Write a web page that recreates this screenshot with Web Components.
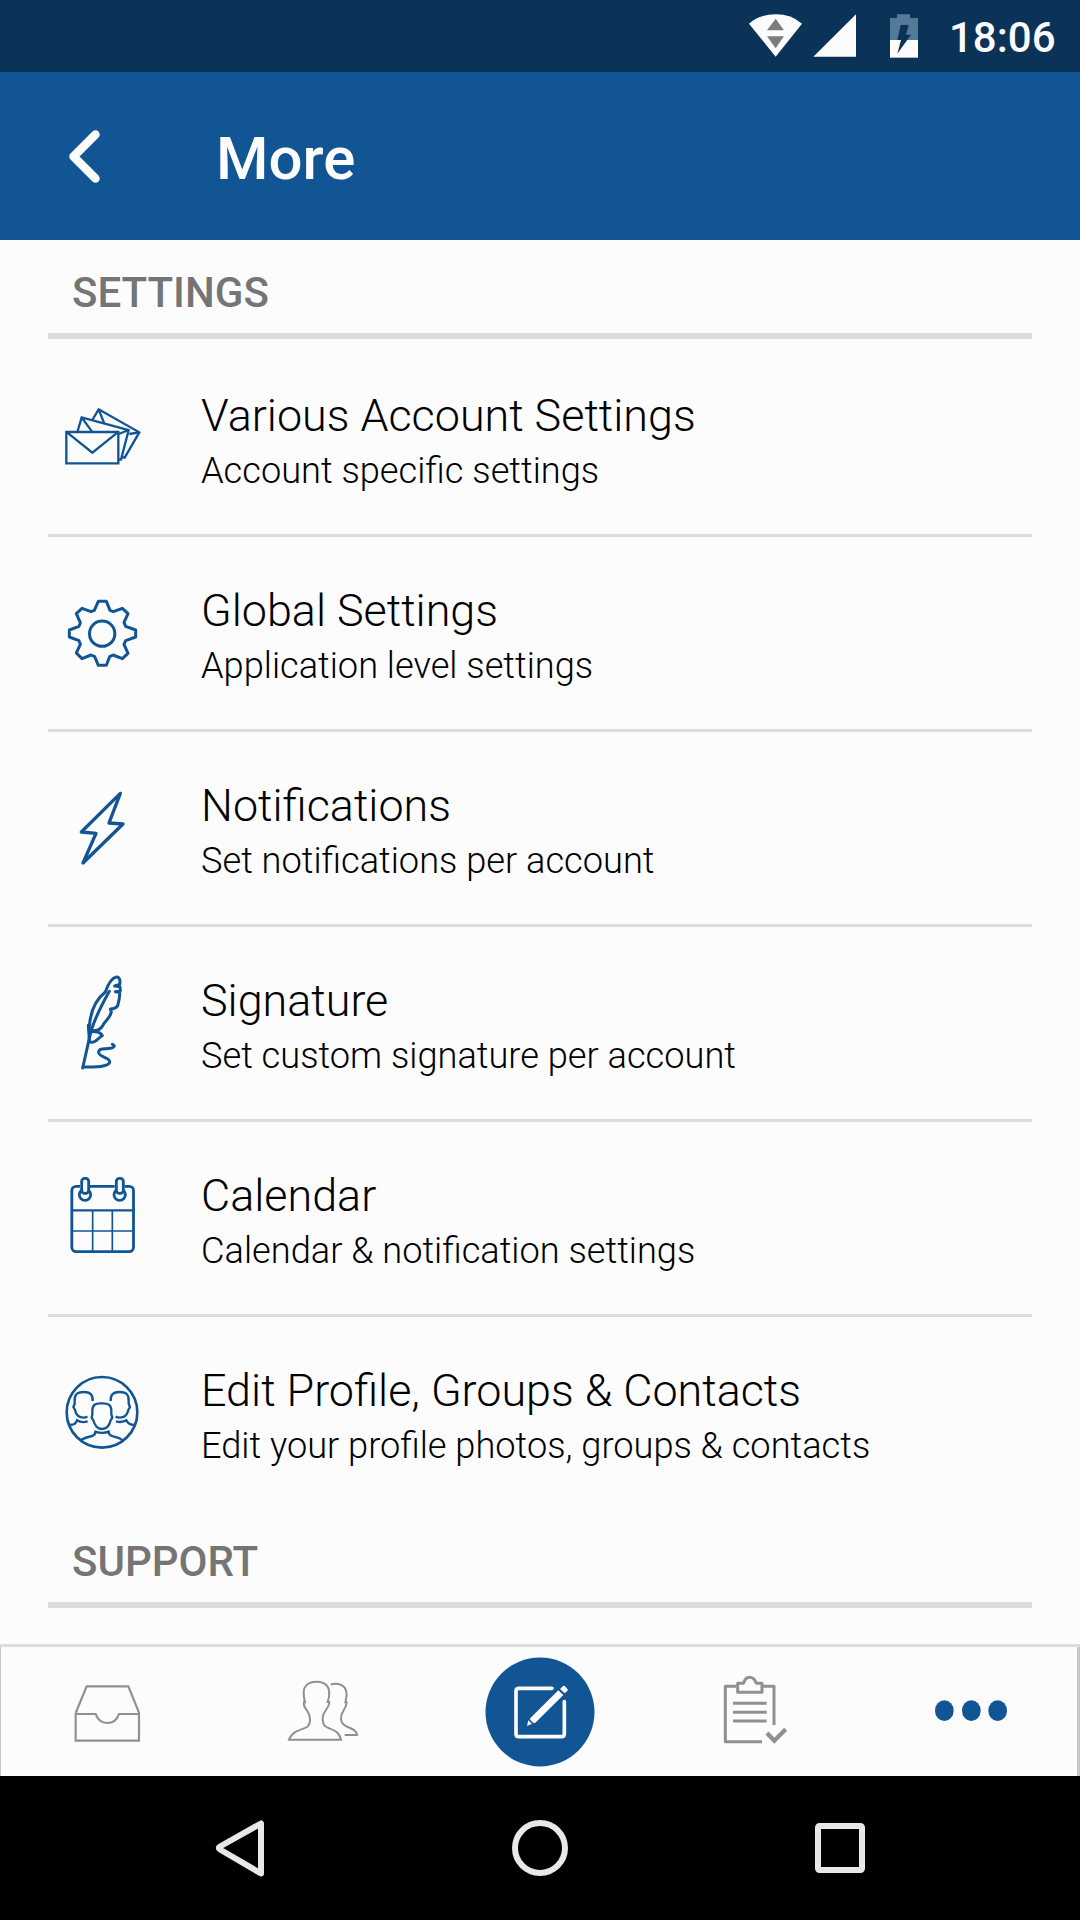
<!DOCTYPE html>
<html lang="en">
<head>
<meta charset="utf-8">
<title>More</title>
<style>
html,body{margin:0;padding:0;height:100%;background:#fcfcfc}
body{font-family:Roboto,"Open Sans",sans-serif;overflow:hidden}
</style>
</head>
<body>
<app-screen></app-screen>
<script>
const BLUE = '#125594';
const icons = {
  mail: ['0 -15 390 390', `<g stroke-width="7"><path d="M79 156H235V250H79Z"/><path d="M82 158L157 218L232 158"/><path d="M113 153L125 112L266 150L243 239H236M125 112L156 155M266 150L236 162"/><path d="M157 120L176 88L298 157L254 233L246 231M176 88L193 131M298 157L268 162"/></g>`],
  gear: ['0 -30 390 390', `<g stroke-width="9" stroke-linejoin="round"><circle cx="186.500" cy="161" r="38"/><path d="M175 64H199L210 91L220 95L247 85L264 101L252 127L257 139L287 150V171L257 182L252 193L264 220L247 236L219 225L209 230L199 256H175L164 230L153 225L126 236L109 219L121 193L117 182L88 171V150L117 139L121 128L109 101L126 85L153 95L163 91Z"/></g>`],
  bolt: ['0 -15 390 390', `<path stroke-width="10" stroke-linejoin="round" d="M241 70L124 186L168 190L129 279L249 162L207 159Z"/>`],
  quill: ['0 0 390 390', `<g stroke-width="9" stroke-linecap="round" stroke-linejoin="round"><path d="M128 324L148 235L155 207C165 177 185 135 208 94"/><path d="M148 212V200C151 157 164 121 196 96C203 76 214 54 229 51C240 50 241 64 239 73L224 78L240 80L241 92L226 95L239 97C240 111 236 126 233 137C228 145 220 147 211 147L214 155C211 175 193 184 188 197C182 208 168 213 153 212"/><path d="M145 196L147 224L153 213C166 217 181 212 187 227C178 229 171 247 154 247L148 245L147 225"/><path d="M129 321C161 322 203 322 209 307C213 292 178 293 176 278C175 262 195 268 210 265C218 265 223 260 223 257L217 253"/></g>`],
  calendar: ['0 -15 390 390', `<g stroke-width="8.500"><rect x="95.500" y="79" width="185" height="196" rx="13"/><path stroke-width="7" d="M96 151H280"/><path stroke-width="5" d="M158 151V275M217 151V275M96 213H280"/><g><path stroke="#fcfcfc" stroke-width="13" d="M120 79H150"/><circle cx="135" cy="104" r="17"/><rect x="125" y="55" width="21" height="45" rx="9" fill="#fcfcfc"/></g><g transform="translate(104 0)"><path stroke="#fcfcfc" stroke-width="13" d="M120 79H150"/><circle cx="135" cy="104" r="17"/><rect x="125" y="55" width="21" height="45" rx="9" fill="#fcfcfc"/></g></g>`],
  people: ['0 0 390 390', `<g stroke-width="8"><circle cx="186" cy="187" r="106"/><path stroke-width="7" d="M185 160C166 159 157 165 157 182V194L155 203L160 211C164 228 175 237 186 237C198 237 208 228 212 211L217 203L214 193V182C214 166 206 159 185 160Z"/><path stroke-width="7" d="M158 153C159 134 151 126 131 126C110 126 103 135 104 153V161L100 171L105 180C108 194 118 203 131 203C136 203 140 201 142 199M212 153C211 134 219 126 239 126C260 126 267 135 266 153V161L270 171L265 180C262 194 252 203 239 203C234 203 229 201 227 199"/><path stroke-width="7" d="M90 224C103 226 108 219 111 211C119 216 133 217 143 214M282 224C269 226 263 219 259 211C251 216 239 217 228 214M122 272C134 259 154 263 164 253L166 245C178 249 194 250 206 245L208 253C216 263 237 258 248 272"/></g>`],
  inbox: ['0 51 648 387', `<path stroke-width="6.500" d="M227 249L260 169H385L417 248V332H227V252H287C293 269 304 279 322 279C340 279 351 270 357 252H417"/>`],
  contacts: ['648 51 648 387', `<path stroke-width="6" d="M867 329C875 309 888 304 910 296C922 292 929 288 930 272C931 243 914 239 912 225V217H915C909 193 910 175 918 167C931 152 965 151 979 165C990 177 989 198 983 216H988C987 240 966 242 968 269C969 287 976 290 988 295C1008 303 1018 308 1023 329ZM992 164C1006 158 1026 161 1034 173C1043 186 1040 199 1036 217H1040C1039 239 1023 242 1023 265C1023 280 1030 286 1043 291C1062 299 1069 302 1071 315H1034"/>`],
  compose: ['-24 51 648 387', `<circle cx="300" cy="246" r="163.500" fill="${BLUE}" stroke="none"/><path stroke="#fcfcfc" stroke-width="11" stroke-linecap="round" d="M336 175H237Q228 175 228 184V311Q228 320 237 320H364Q373 320 373 311V215"/><g fill="#fcfcfc" stroke="none"><path d="M355 181L370 195L286 278Q282 281 277 276L271 270Q268 266 272 263ZM360 177L369 168Q372 166 375 169L383 178Q385 181 381 184L374 190ZM265 271L276 282Q270 284 261 288Z"/></g>`],
  tasks: ['624 51 648 387', `<g stroke-width="9" stroke-linejoin="round"><path d="M966 335H856V169H889M969 169H1002V285"/><path d="M893 160H909C913 157 913 153 915 150C922 139 938 140 944 150C947 154 945 157 950 160H966V187H893Z"/><path d="M879 220H980M879 247H980M879 273H980"/><path stroke-width="13" stroke-linejoin="miter" d="M981 309L1003 332L1037 298"/></g>`],
  dots: ['72 201 648 387', `<g fill="${BLUE}" stroke="none"><ellipse cx="313" cy="392" rx="28" ry="31"/><ellipse cx="394" cy="392" rx="28" ry="31"/><ellipse cx="473" cy="392" rx="28" ry="31"/></g>`],
  chevron: ['0 0 400 168', `<path stroke="#fcfcfc" stroke-width="8.500" stroke-linecap="round" stroke-linejoin="round" d="M95.500 62.500L73.500 84.500L95.500 106.500"/>`],
  status: ['0 0 630 216', `<g stroke="none" fill="#fcfcfc"><path d="M87 71Q118 43 167 43Q214 43 246 71L167 170Z"/><path fill="#7b7c7d" d="M141 91L167 56L192 91ZM141 109H192L167 145Z"/><path d="M280 170L408 43V170Z"/><path fill="#557999" d="M510 120V54H531V43H570V54H594V120Z"/><path d="M510 120H594V173H510Z"/><path fill="#0b3358" d="M542 75H566L558 104H573L532 161L543 120H532Z"/></g>`],
  back: ['90 0 300 144', `<path stroke="#e8e8e8" stroke-width="6" stroke-linejoin="round" d="M261 47.500V97.500L220 73.500Q217.500 72 220 70.500Z"/>`],
  home: ['390 0 300 144', `<circle cx="540" cy="72" r="25" stroke="#e8e8e8" stroke-width="6"/>`],
  recents: ['690 0 300 144', `<rect x="818" y="50" width="44" height="44" rx="1.500" stroke="#e8e8e8" stroke-width="6"/>`]
};

const define = (name, render) => customElements.define(name, class extends HTMLElement {
  connectedCallback() {
    if (!this.shadowRoot) this.attachShadow({mode: 'open'}).innerHTML = render(this);
  }
});

define('line-icon', el => {
  const [box, art] = icons[el.getAttribute('name')];
  return `<style>:host{display:block;flex:none}svg{display:block;width:100%;height:100%;fill:none;stroke:currentColor}</style><svg viewBox="${box}" aria-hidden="true">${art}</svg>`;
});

define('status-bar', () => `<style>
:host{display:flex;justify-content:flex-end;height:72px;background:#0b3358;color:#fcfcfc}
line-icon{width:210px;height:72px}
time{width:150px;box-sizing:border-box;padding-left:19px;font-size:42px;font-weight:500;line-height:76px;white-space:nowrap}
</style><line-icon name="status"></line-icon><time><slot></slot></time>`);

define('title-bar', () => `<style>
:host{display:flex;height:168px;background:${BLUE};color:#fcfcfc}
line-icon{width:400px;height:168px;margin-right:-184px}
h1{margin:0;font-size:60px;font-weight:500;line-height:174px}
</style><line-icon name="chevron"></line-icon><h1><slot></slot></h1>`);

define('section-header', () => `<style>
:host{display:block;box-sizing:border-box;height:99px;margin:0 48px;padding-left:24px;border-bottom:6px solid #dcdedd;color:#757575;font-size:42px;font-weight:500;line-height:105px}
</style><slot></slot>`);

define('setting-row', el => `<style>
:host{display:flex;height:195px;color:#000;
 background:linear-gradient(#dcdedd,#dcdedd) 48px 0/984px 3px no-repeat}
:host([first]){background:none}
line-icon{width:130px;height:130px;margin:36px 31px 0 40px;color:${BLUE}}
.text{padding-top:49px;font-weight:300;white-space:nowrap}
.t{font-size:44.880px;line-height:56px}
.s{font-size:36.200px;line-height:42px;margin-top:6px}
</style><line-icon name="${el.getAttribute('icon')}"></line-icon>
<div class="text"><div class="t"><slot></slot></div><div class="s"><slot name="detail"></slot></div></div>`);

define('tab-bar', () => `<style>
:host{display:flex;box-sizing:border-box;height:132px;border-top:3px solid #dcdedd;background:#fcfcfc;color:#909090;box-shadow:inset 1px 0 #c5cacd,inset -3px 0 #c5cacd}
line-icon{width:216px;height:129px}
</style>${['inbox','contacts','compose','tasks','dots'].map(n => `<line-icon name="${n}"></line-icon>`).join('')}`);

define('nav-bar', () => `<style>
:host{display:flex;justify-content:center;height:144px;background:#000}
line-icon{width:300px;height:144px}
</style>${['back','home','recents'].map(n => `<line-icon name="${n}"></line-icon>`).join('')}`);

const rows = [
  ['mail', 'Various Account Settings', 'Account specific settings'],
  ['gear', 'Global Settings', 'Application level settings'],
  ['bolt', 'Notifications', 'Set notifications per account'],
  ['quill', 'Signature', 'Set custom signature per account'],
  ['calendar', 'Calendar', 'Calendar &amp; notification settings'],
  ['people', 'Edit Profile, Groups &amp; Contacts', 'Edit your profile photos, groups &amp; contacts']
];
define('app-screen', () => `<style>
:host{display:flex;flex-direction:column;width:1080px;height:1920px;background:#fcfcfc;overflow:hidden}
main{flex:1;min-height:0;overflow:hidden}
status-bar,title-bar,tab-bar,nav-bar{flex:none}
</style>
<status-bar>18:06</status-bar>
<title-bar>More</title-bar>
<main>
<section-header>SETTINGS</section-header>
${rows.map(([i, t, s], n) => `<setting-row icon="${i}"${n ? '' : ' first'}>${t}<span slot="detail">${s}</span></setting-row>`).join('')}
<section-header>SUPPORT</section-header>
</main>
<tab-bar></tab-bar>
<nav-bar></nav-bar>`);
</script>
</body>
</html>
